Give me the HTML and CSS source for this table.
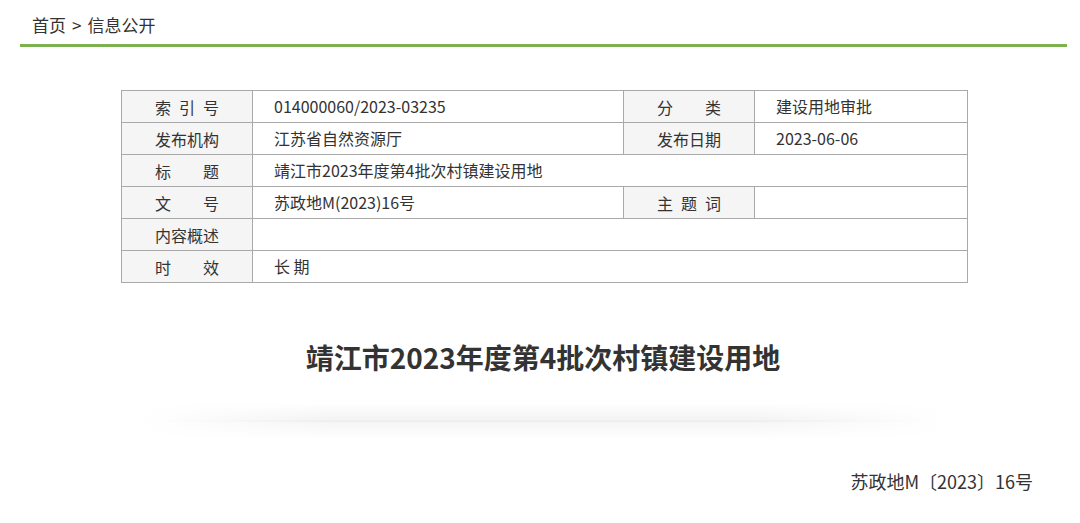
FILE: index.html
```html
<!DOCTYPE html>
<html lang="zh-CN">
<head>
  <meta charset="UTF-8" />
  <meta name="viewport" content="width=device-width, initial-scale=1" />
  <title>信息公开</title>
  <link rel="stylesheet" href="styles.css">
</head>
<body>

  <div class="crumbs">
    <span>首页</span><span class="sep">&gt;</span><span>信息公开</span>
  </div>

  <table class="meta">
    <colgroup>
      <col class="c-label">
      <col class="c-value">
      <col class="c-label">
      <col class="c-value2">
    </colgroup>
    <tr>
      <th><span class="lbl">索引号</span></th>
      <td>014000060/2023-03235</td>
      <th><span class="lbl">分类</span></th>
      <td>建设用地审批</td>
    </tr>
    <tr>
      <th><span class="lbl">发布机构</span></th>
      <td>江苏省自然资源厅</td>
      <th><span class="lbl">发布日期</span></th>
      <td>2023-06-06</td>
    </tr>
    <tr>
      <th><span class="lbl">标题</span></th>
      <td colspan="3">靖江市2023年度第4批次村镇建设用地</td>
    </tr>
    <tr>
      <th><span class="lbl">文号</span></th>
      <td>苏政地M(2023)16号</td>
      <th><span class="lbl">主题词</span></th>
      <td></td>
    </tr>
    <tr>
      <th><span class="lbl">内容概述</span></th>
      <td colspan="3"></td>
    </tr>
    <tr>
      <th><span class="lbl">时效</span></th>
      <td colspan="3">长 期</td>
    </tr>
  </table>

  <h1 class="doc-title">靖江市2023年度第4批次村镇建设用地</h1>
  <div class="divider"></div>

  <div class="doc-no">苏政地M〔2023〕16号</div>

</body>
</html>
```

FILE: styles.css
```css
body {
  margin: 0;
  background: #fff;
  color: #333;
  font-family: "Noto Sans CJK SC", "Noto Sans", sans-serif;
}
.crumbs {
  margin-left: 20px;
  width: 1047px;
  box-sizing: border-box;
  padding: 12px 0 0 12px;
  height: 47px;
  font-size: 17px;
  line-height: 26px;
  color: #333;
  border-bottom: 3px solid #7cb152;
}
.crumbs .sep {
  margin: 0 6px;
}
.meta {
  margin: 43px 0 0 121px;
  width: 847px;
  border-collapse: collapse;
  font-size: 16px;
  color: #333;
}
.meta .c-label {
  width: 131px;
}
.meta .c-value {
  width: 371px;
}
.meta .c-value2 {
  width: 213px;
}
.meta th,
.meta td {
  border: 1px solid #a9a9a9;
  height: 29px;
  padding: 0 0 2px;
  font-weight: normal;
  line-height: 20px;
}
.meta th {
  background: #f5f5f5;
  text-align: center;
}
.meta td {
  padding-left: 21px;
  text-align: left;
}
.lbl {
  display: inline-block;
  width: 4em;
  text-align: justify;
  text-align-last: justify;
  vertical-align: middle;
}
.doc-title {
  margin: 54px 0 0;
  text-align: center;
  font-size: 28px;
  line-height: 40px;
  font-weight: bold;
  color: #333;
  padding-left: 6px;
}
.divider {
  margin: 26px auto 0 140px;
  width: 805px;
  height: 36px;
  background:
    linear-gradient(to right, rgba(255,255,255,1), rgba(255,255,255,0) 25%, rgba(255,255,255,0) 75%, rgba(255,255,255,1)),
    linear-gradient(to bottom, rgba(0,0,0,0) 0%, rgba(0,0,0,0.05) 48%, rgba(0,0,0,0.09) 50%, rgba(0,0,0,0.04) 54%, rgba(0,0,0,0) 100%);
}
.doc-no {
  margin-top: 29px;
  padding-right: 47px;
  text-align: right;
  font-size: 18px;
  line-height: 26px;
  color: #333;
}
```
